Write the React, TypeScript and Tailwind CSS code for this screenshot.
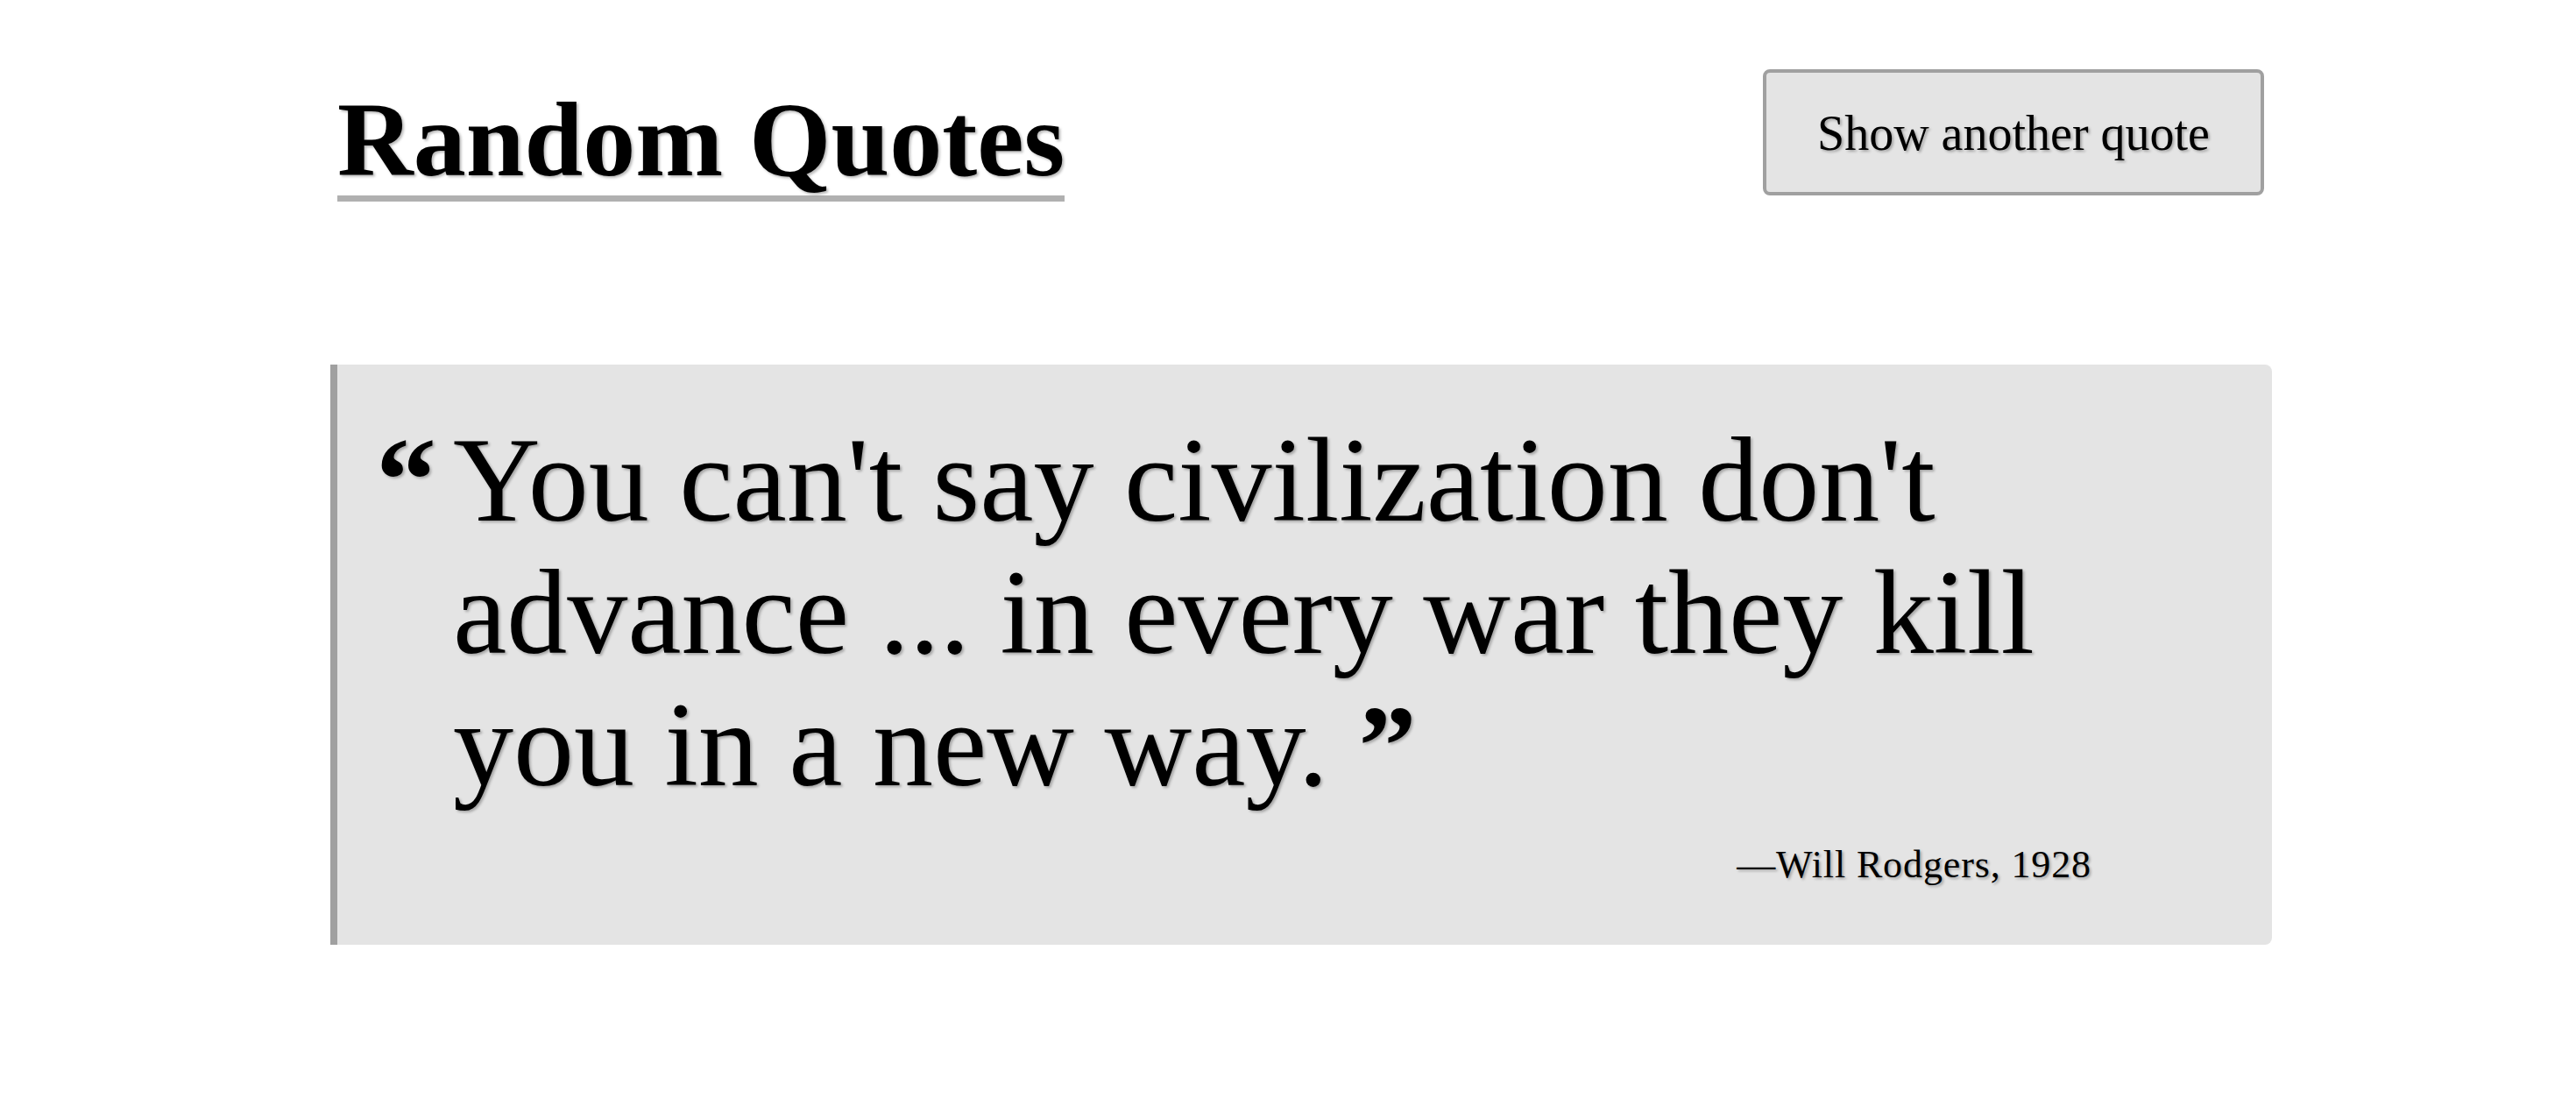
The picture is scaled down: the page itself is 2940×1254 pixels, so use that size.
import { useState } from "react";

type Quote = {
  text: string;
  author: string;
  year: string;
};

const QUOTES: readonly Quote[] = [
  {
    text: "You can't say civilization don't advance ... in every war they kill you in a new way.",
    author: "Will Rodgers",
    year: "1928",
  },
] as const;

const SHADOW = "[text-shadow:2px_2px_3px_rgba(0,0,0,0.28)]";

export default function App() {
  const [index, setIndex] = useState(0);
  const quote = QUOTES[index % QUOTES.length];

  return (
    <div className="min-h-screen w-full bg-white font-['Liberation_Serif','Times_New_Roman',serif] text-black">
      <div className="ml-[377px] w-[2216px]">
        <header className="flex items-start justify-between pt-[79px]">
          <h1
            className={`mt-[21px] ml-[8px] border-b-[7px] border-[#b0b0b0] pb-[3px] text-[120px] font-bold leading-[120px] ${SHADOW}`}
          >
            Random Quotes
          </h1>

          <button
            type="button"
            onClick={() => setIndex((prev) => prev + 1)}
            className={`mr-[9px] flex h-[144px] w-[572px] items-center justify-center rounded-lg border-4 border-[#a0a0a0] bg-[#e4e4e4] pt-[2px] text-[56px] leading-none ${SHADOW}`}
          >
            Show another quote
          </button>
        </header>

        <blockquote className="mt-[186px] rounded-r-lg border-l-8 border-[#a0a0a0] bg-[#e4e4e4] pb-[58px] pl-[44px] pt-[56px]">
          <div className="flex">
            <span
              className={`w-[88px] shrink-0 text-[138px] font-bold leading-[151px] ${SHADOW}`}
            >
              “
            </span>
            <p className={`w-[1870px] text-[138px] leading-[151px] ${SHADOW}`}>
              {quote.text}{" "}
              <span className="text-[132px] font-bold">”</span>
            </p>
          </div>
          <p
            className={`mt-[27px] w-[1958px] text-right text-[44px] leading-[66px] tracking-[0.02em] ${SHADOW}`}
          >
            —{quote.author}, {quote.year}
          </p>
        </blockquote>
      </div>
    </div>
  );
}
